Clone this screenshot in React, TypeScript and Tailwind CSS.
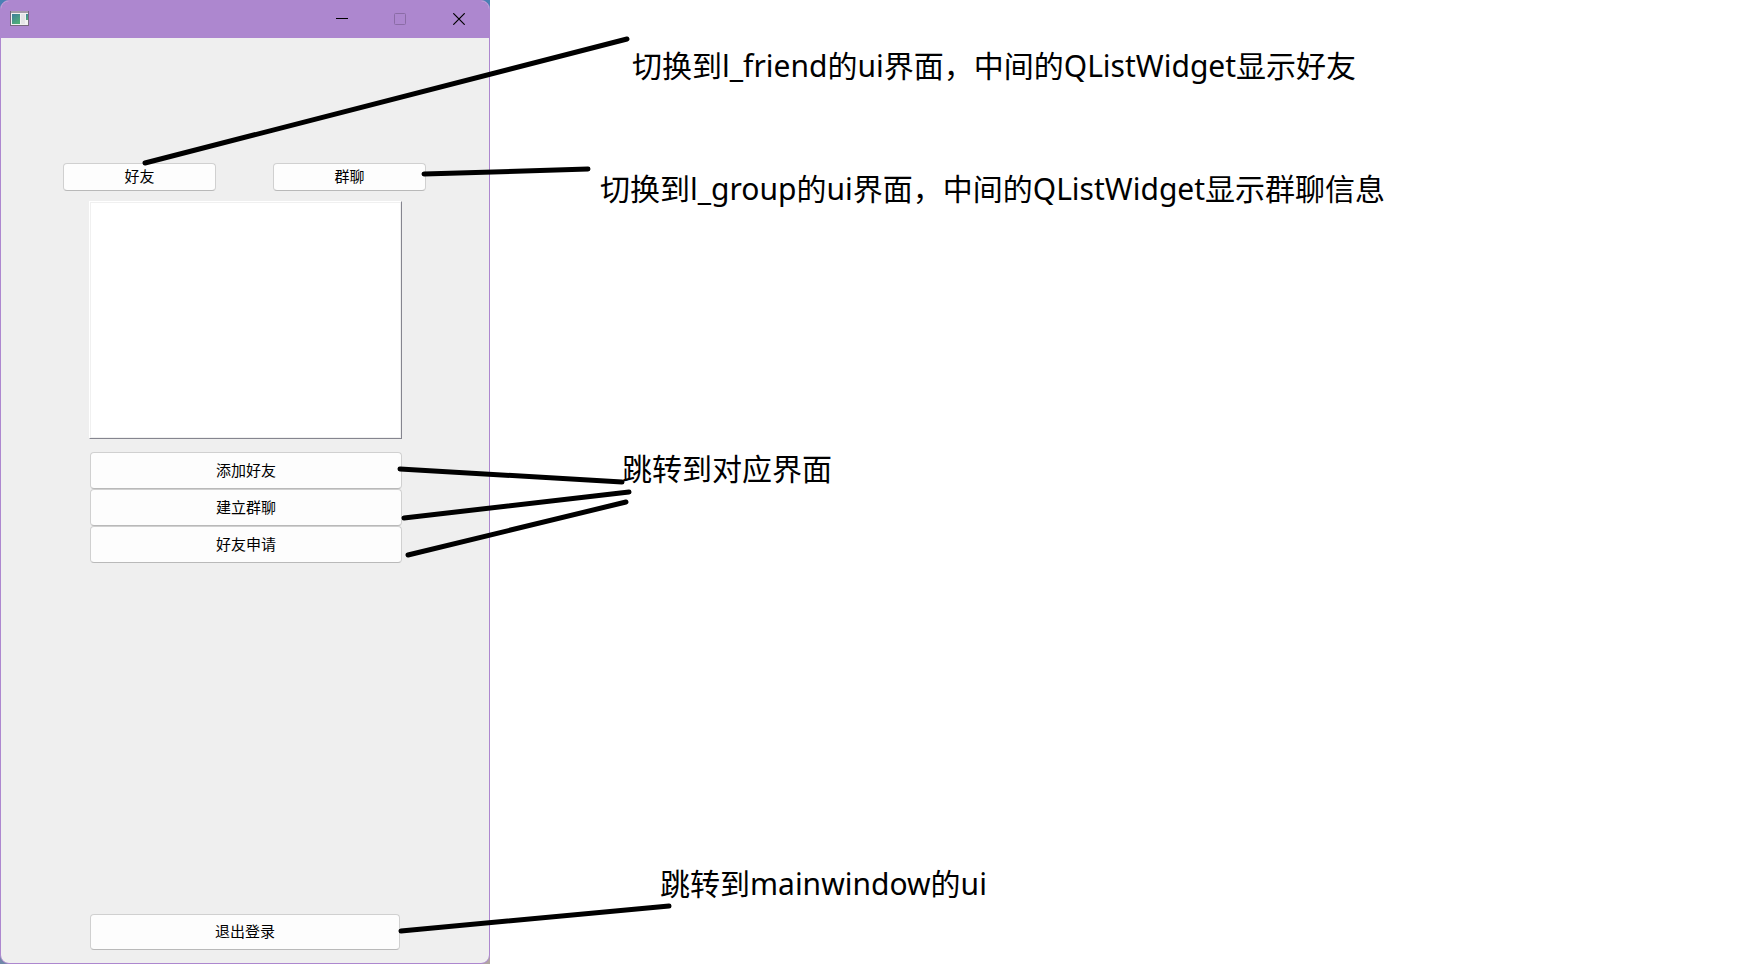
import React from "react";

type Point = [number, number];

const pointers: [Point, Point][] = [
  [[145, 163], [627, 39]],
  [[424, 174], [588, 169]],
  [[400, 469], [622, 482]],
  [[404, 518], [629, 492]],
  [[408, 555], [626, 502]],
  [[401, 931], [669, 906]],
];

function AppIcon() {
  return (
    <svg width="20" height="16" viewBox="0 0 20 16" aria-hidden="true" shapeRendering="crispEdges">
      <defs>
        <linearGradient id="pane" x1="0" y1="0" x2="0.6" y2="1">
          <stop offset="0" stopColor="#3f7d9c" />
          <stop offset="1" stopColor="#4fae78" />
        </linearGradient>
      </defs>
      <rect x="1" y="0" width="19" height="15" fill="#77697f" />
      <rect x="2" y="1" width="17" height="13" fill="#f2f2f2" />
      <rect x="2" y="0" width="17" height="2" fill="#a49ba8" />
      <rect x="3" y="3" width="8" height="10" fill="url(#pane)" />
      <rect x="12" y="3" width="4" height="10" fill="#e4e4e6" />
      <rect x="17" y="3" width="2" height="6" fill="url(#pane)" />
    </svg>
  );
}

function TitleBar() {
  return (
    <header className="flex h-[37px] shrink-0 items-center justify-between bg-[#ad87cf] pb-0.5 pl-2">
      <AppIcon />
      <div className="flex h-full">
        <button type="button" aria-label="最小化" className="flex w-[58px] items-center justify-center">
          <svg width="12" height="12" viewBox="0 0 12 12" aria-hidden="true">
            <path d="M0 5.5h12" stroke="#000" />
          </svg>
        </button>
        <button type="button" aria-label="最大化" disabled className="flex w-[58px] items-center justify-center">
          <svg width="12" height="12" viewBox="0 0 12 12" fill="none" aria-hidden="true">
            <rect x="0.5" y="0.5" width="11" height="11" rx="1" stroke="#8b6ca6" />
          </svg>
        </button>
        <button type="button" aria-label="关闭" className="flex w-[60px] items-center justify-center">
          <svg width="12" height="12" viewBox="0 0 12 12" aria-hidden="true">
            <path d="M0.3 0.3l11.4 11.4M11.7 0.3L0.3 11.7" stroke="#000" strokeWidth="1.2" />
          </svg>
        </button>
      </div>
    </header>
  );
}

function PushButton({ children, size }: { children: string; size: string }) {
  return (
    <button
      type="button"
      className={`flex items-center justify-center rounded-[4px] border border-[#d0d0d0] border-b-[#b9b9b9] bg-[#fdfdfd] pb-0.5 text-[15px] leading-5 text-black ${size}`}
    >
      {children}
    </button>
  );
}

function Note({ children, place }: { children: React.ReactNode; place: string }) {
  return <p className={`absolute text-[30px] leading-10 whitespace-nowrap text-black ${place}`}>{children}</p>;
}

export default function App() {
  return (
    <main className="relative min-h-screen bg-white font-['Noto_Sans','Noto_Sans_CJK_SC',sans-serif]">
      <div className="w-[490px] bg-[conic-gradient(#4a80b4_25%,#b0a5a0_25%_50%,#7088a8_50%_75%,#4a80b4_75%)]">
        <section className="flex min-h-[964px] flex-col overflow-hidden rounded-[9px] border border-[#ad87cf] bg-[#efefef]">
          <TitleBar />
          <nav className="mt-[125px] flex gap-[57px] pl-[62px]">
            <PushButton size="h-7 w-[153px]">好友</PushButton>
            <PushButton size="h-7 w-[153px]">群聊</PushButton>
          </nav>
          <div className="mt-[10px] ml-[88px] w-[313px]">
            <ul
              aria-label="列表"
              className="h-[238px] border border-t-white border-r-[#85858f] border-b-[#85858f] border-l-white bg-white shadow-[inset_0_0_0_1px_#f0f0f0]"
            />
            <div className="mt-[13px] ml-px flex flex-col">
              <PushButton size="h-[37px]">添加好友</PushButton>
              <PushButton size="h-[37px]">建立群聊</PushButton>
              <PushButton size="h-[37px]">好友申请</PushButton>
            </div>
          </div>
          <div className="mt-auto mb-[13px] ml-[89px] flex">
            <PushButton size="h-9 w-[310px]">退出登录</PushButton>
          </div>
        </section>
      </div>

      <Note place="top-[46px] left-[632px]">切换到l_friend的ui界面，中间的QListWidget显示好友</Note>
      <Note place="top-[169px] left-[600px]">切换到l_group的ui界面，中间的QListWidget显示群聊信息</Note>
      <Note place="top-[449px] left-[622px]">跳转到对应界面</Note>
      <Note place="top-[864px] left-[660px]">跳转到mainwindow的ui</Note>

      <svg
        className="pointer-events-none absolute top-0 left-0"
        width="700"
        height="964"
        viewBox="0 0 700 964"
        stroke="#000"
        strokeWidth="5"
        strokeLinecap="round"
        aria-hidden="true"
      >
        {pointers.map(([from, to], i) => (
          <line key={i} x1={from[0]} y1={from[1]} x2={to[0]} y2={to[1]} />
        ))}
      </svg>
    </main>
  );
}
